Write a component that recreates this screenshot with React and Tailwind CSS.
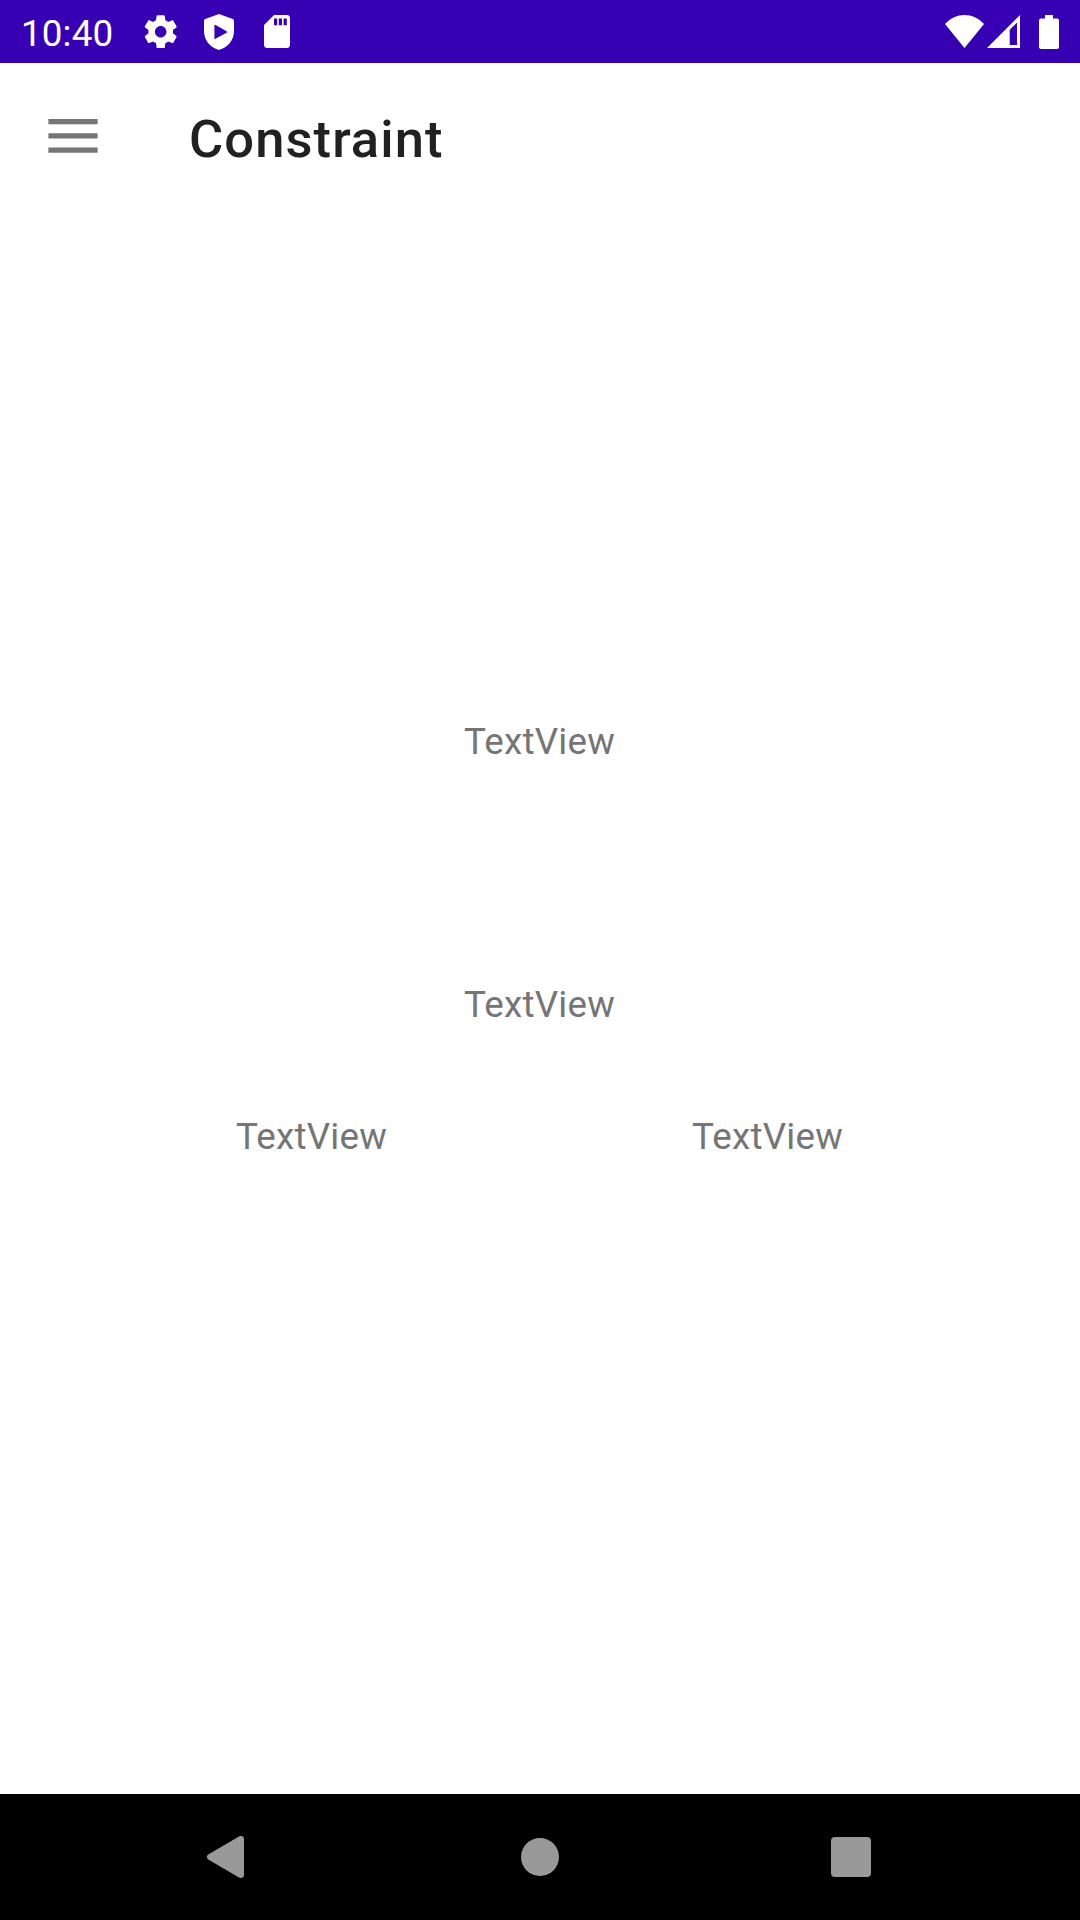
function StatusBar() {
  return (
    <header className="flex h-[63px] w-full items-center bg-[#3700b3] pr-[21px] pl-[21px] text-white">
      <span className="w-[120px] pt-[4px] text-[36.75px] leading-[43px] tracking-[0.004em]">10:40</span>
      <svg className="size-[39.4px]" viewBox="0 0 24 24" fill="currentColor">
        <path d="M19.43 12.98c.04-.32.07-.64.07-.98s-.03-.66-.07-.98l2.11-1.65c.19-.15.24-.42.12-.64l-2-3.46c-.12-.22-.39-.3-.61-.22l-2.49 1c-.52-.4-1.08-.73-1.69-.98l-.38-2.65C14.46 2.18 14.25 2 14 2h-4c-.25 0-.46.18-.49.42l-.38 2.65c-.61.25-1.17.59-1.69.98l-2.49-1c-.23-.09-.49 0-.61.22l-2 3.46c-.13.22-.07.49.12.64l2.11 1.65c-.04.32-.07.65-.07.98s.03.66.07.98l-2.11 1.65c-.19.15-.24.42-.12.64l2 3.46c.12.22.39.3.61.22l2.49-1c.52.4 1.08.73 1.69.98l.38 2.65c.03.24.24.42.49.42h4c.25 0 .46-.18.49-.42l.38-2.65c.61-.25 1.17-.59 1.69-.98l2.49 1c.23.09.49 0 .61-.22l2-3.46c.12-.22.07-.49-.12-.64l-2.11-1.65zM12 15.5c-1.93 0-3.5-1.57-3.5-3.5s1.57-3.5 3.5-3.5 3.5 1.57 3.5 3.5-1.57 3.5-3.5 3.5z" />
      </svg>
      <svg className="ml-[23.6px] h-[36px] w-[30px]" viewBox="0 0 30 36" fill="currentColor" fillRule="evenodd">
        <path d="M15 0 28.8 5.1Q30 5.6 30 6.9V17C30 26 24 33.6 15 36 6 33.6 0 26 0 17V6.9Q0 5.6 1.2 5.1ZM10.4 11.4V24.4Q10.6 25.2 11.5 24.8L22.6 18.8Q23.5 18 22.6 17.3L11.6 11Q10.6 10.6 10.4 11.4Z" />
      </svg>
      <svg className="ml-[30px] h-[33px] w-[26px]" viewBox="0 0 26 33" fill="currentColor" fillRule="evenodd">
        <path d="M10 0H23Q26 .3 26 3.3V29.7Q26 32.7 23 33H3Q0 32.7 0 29.7V10ZM10 3.5V10.3H13.2V3.5ZM14.8 3.5V10.3H18V3.5ZM19.6 3.5V10.3H22.8V3.5Z" />
      </svg>
      <svg className="ml-auto h-[33px] w-[39px]" viewBox="0 0 39 33" fill="currentColor">
        <path d="M0 9C11-3 28-3 39 9L19.5 33Z" />
      </svg>
      <svg className="ml-[3px] h-[33px] w-[33px]" viewBox="0 0 33 33" fill="currentColor" fillRule="evenodd">
        <path d="M33 0V33H0ZM30 7.5 22.7 14.7V30H30Z" />
      </svg>
      <svg className="ml-[19px] h-[34px] w-[20px]" viewBox="0 0 20 34" fill="currentColor">
        <path d="M6 0H14V3.4H18Q20 3.5 20 5.5V32Q20 34 18 34H2Q0 34 0 32V5.5Q0 3.5 2 3.4H6Z" />
      </svg>
    </header>
  );
}

function Toolbar() {
  return (
    <div className="flex h-[147px] w-full items-center pl-[48px]">
      <svg className="mb-[1px] h-[34px] w-[50px]" viewBox="0 0 50 34" fill="#757575">
        <path d="M.4 0H49.6V5.3H.4ZM.4 14.2H49.6V19.5H.4ZM.4 28.4H49.6V33.7H.4Z" />
      </svg>
      <h1 className="ml-[91px] pt-[4px] text-[52.5px] leading-[62px] font-medium tracking-[0.0205em] text-[#212121]">
        Constraint
      </h1>
    </div>
  );
}

function Label() {
  return (
    <p className="pr-[1px] text-center text-[36.75px] leading-[50px] tracking-[0.006em] text-[#757575]">TextView</p>
  );
}

function NavigationBar() {
  return (
    <nav className="flex h-[126px] w-full items-center bg-black pl-[206px] text-[#999999]">
      <svg className="h-[42px] w-[38px]" viewBox="0 0 38 42" fill="currentColor">
        <path d="M1.8 18.8 33 .6C35.6-.6 38 .5 38 3V39C38 41.5 35.6 42.6 33 41.4L1.8 23.2Q0 21 1.8 18.8Z" />
      </svg>
      <span className="ml-[277px] size-[38px] rounded-full bg-[#999999]" />
      <span className="ml-[272px] size-[40px] rounded-[4px] bg-[#999999]" />
    </nav>
  );
}

export default function App() {
  return (
    <div className="flex h-[1920px] w-[1080px] flex-col overflow-hidden bg-white font-['Roboto',sans-serif]">
      <StatusBar />
      <Toolbar />
      <main className="flex-1 pt-[507px]">
        <Label />
        <div className="mt-[213px]">
          <Label />
        </div>
        <div className="mt-[82px] grid grid-cols-[456px_456px] justify-center">
          <Label />
          <Label />
        </div>
      </main>
      <NavigationBar />
    </div>
  );
}
